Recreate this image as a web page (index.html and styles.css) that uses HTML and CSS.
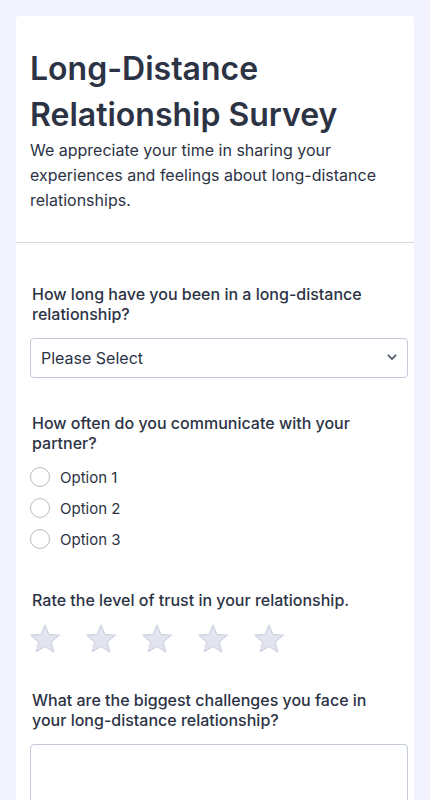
FILE: index.html
```html
<!doctype html>
<html lang="en">
<head>
    <meta charset="utf-8">
    <meta name="viewport" content="width=device-width, initial-scale=1.0">
    <title>Long-Distance Relationship Survey</title>
    <link rel="stylesheet" href="styles.css">
</head>
<body>
    <div class="card">
        <div class="form-header">
            <h1>Long-Distance Relationship Survey</h1>
            <p>We appreciate your time in sharing your experiences and feelings about long-distance relationships.</p>
        </div>

        <form class="survey">
            <div class="question">
                <label for="duration">How long have you been in a long-distance relationship?</label>
                <div class="select-wrap">
                    <select id="duration" name="duration">
                        <option>Please Select</option>
                        <option>Less than 6 months</option>
                        <option>6 months - 1 year</option>
                        <option>1 - 2 years</option>
                        <option>More than 2 years</option>
                    </select>
                    <svg class="chevron" width="12" height="12" viewBox="0 0 12 12">
                        <path d="M2.3 4.3 6 8l3.7-3.7" fill="none" stroke="#5c6478" stroke-width="1.8" stroke-linecap="round" stroke-linejoin="round"/>
                    </svg>
                </div>
            </div>

            <div class="question">
                <label>How often do you communicate with your partner?</label>
                <div class="options">
                    <label class="option"><input type="radio" name="communicate" value="1"><span>Option 1</span></label>
                    <label class="option"><input type="radio" name="communicate" value="2"><span>Option 2</span></label>
                    <label class="option"><input type="radio" name="communicate" value="3"><span>Option 3</span></label>
                </div>
            </div>

            <div class="question">
                <label>Rate the level of trust in your relationship.</label>
                <div class="stars">
                    <svg class="star" viewBox="0 0 30 28"><path d="M15 1 18.9 10.4 29.1 11.2 21.3 17.9 23.7 27.8 15 22.5 6.3 27.8 8.7 17.9 0.9 11.2 11.1 10.4z"/></svg>
                    <svg class="star" viewBox="0 0 30 28"><path d="M15 1 18.9 10.4 29.1 11.2 21.3 17.9 23.7 27.8 15 22.5 6.3 27.8 8.7 17.9 0.9 11.2 11.1 10.4z"/></svg>
                    <svg class="star" viewBox="0 0 30 28"><path d="M15 1 18.9 10.4 29.1 11.2 21.3 17.9 23.7 27.8 15 22.5 6.3 27.8 8.7 17.9 0.9 11.2 11.1 10.4z"/></svg>
                    <svg class="star" viewBox="0 0 30 28"><path d="M15 1 18.9 10.4 29.1 11.2 21.3 17.9 23.7 27.8 15 22.5 6.3 27.8 8.7 17.9 0.9 11.2 11.1 10.4z"/></svg>
                    <svg class="star" viewBox="0 0 30 28"><path d="M15 1 18.9 10.4 29.1 11.2 21.3 17.9 23.7 27.8 15 22.5 6.3 27.8 8.7 17.9 0.9 11.2 11.1 10.4z"/></svg>
                </div>
            </div>

            <div class="question">
                <label for="challenges">What are the biggest challenges you face in your long-distance relationship?</label>
                <textarea id="challenges" name="challenges"></textarea>
            </div>
        </form>
    </div>
</body>
</html>
```

FILE: styles.css
```css
/* General styling */
body {
    font-family: Inter, 'Noto Sans', sans-serif;
    margin: 0;
    padding: 16px 16px 0;
    background-color: #f3f3fe;
    color: #2c3345;
}

/* Card */
.card {
    background: #ffffff;
    border-radius: 4px;
    min-height: 900px;
}

.form-header {
    padding: 30px 14px 29px;
    border-bottom: 1px solid #d8dae4;
}

.form-header h1 {
    margin: 0;
    font-size: 32px;
    font-weight: 600;
    line-height: 46px;
}

.form-header p {
    margin: 0;
    font-size: 16px;
    line-height: 25px;
}

/* Questions */
.survey {
    padding: 41px 6px 0 14px;
}

.question {
    margin-bottom: 35px;
}

.question > label {
    display: block;
    padding: 0 30px 0 2px;
    margin-bottom: 14px;
    font-size: 16px;
    line-height: 20px;
    font-weight: 500;
}

.select-wrap {
    position: relative;
}

select {
    width: 100%;
    height: 40px;
    padding: 0 32px 0 10px;
    border: 1px solid #c3cad8;
    border-radius: 4px;
    background: #ffffff;
    font-family: inherit;
    font-size: 16px;
    color: #2c3345;
    appearance: none;
    -webkit-appearance: none;
}

.chevron {
    position: absolute;
    right: 10px;
    top: 13px;
}

/* Radio options */
.options {
    display: flex;
    flex-direction: column;
    gap: 11px;
    margin-bottom: 41px;
}

.option {
    display: flex;
    align-items: center;
    gap: 10px;
    font-size: 15px;
    height: 20px;
}

.option input {
    appearance: none;
    -webkit-appearance: none;
    width: 20px;
    height: 20px;
    margin: 0;
    border: 1px solid #b8bdc9;
    border-radius: 50%;
    background: #ffffff;
}

/* Star rating */
.stars {
    display: flex;
    gap: 26px;
    margin-bottom: 38px;
}

.star {
    width: 30px;
    height: 28px;
    overflow: visible;
    fill: #e2e5ef;
    stroke: #d0d4e0;
    stroke-width: 1.2;
    stroke-linejoin: round;
}

textarea {
    display: block;
    width: 100%;
    height: 120px;
    box-sizing: border-box;
    border: 1px solid #c3cad8;
    border-radius: 4px;
    font-family: inherit;
    resize: none;
}
```
